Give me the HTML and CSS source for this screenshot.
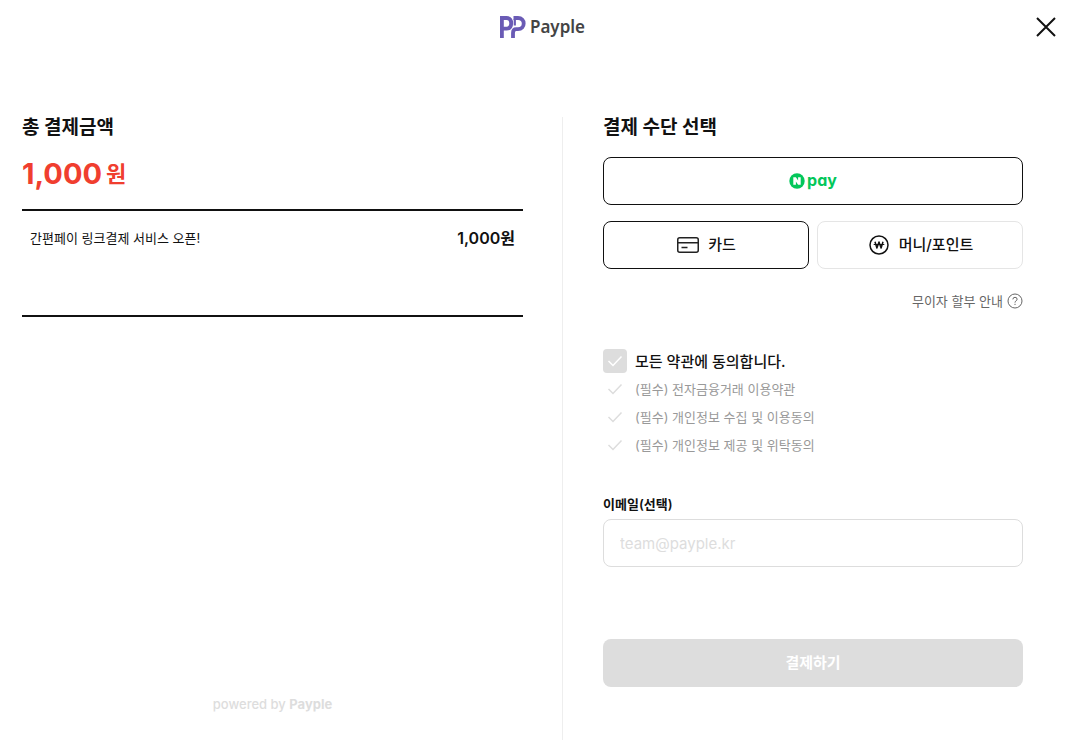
FILE: index.html
```html
<!DOCTYPE html>
<html lang="ko">
<head>
  <meta charset="UTF-8">
  <meta name="viewport" content="width=device-width, initial-scale=1.0">
  <title>Payple 결제</title>
  <link rel="stylesheet" href="styles.css">
</head>
<body>
  <header class="header">
    <a href="#" class="logo">
      <svg width="26" height="24" viewBox="0 0 26 24" fill="none" stroke="#6a5bb5" stroke-width="3.800">
        <path d="M1.900 23V3h4.700c3.200 0 4.600 2.200 4.600 5.300s-1.400 5.300-4.600 5.300H3"/>
        <path d="M13 23v-5c0-2.700 1-3.800 3.200-3.800H18c3.700 0 5.700-2.500 5.700-5.700S21.700 3 18 3h-4.500"/>
        <path d="M14.800 4v6.500" stroke-width="2.200"/>
      </svg>
      <span class="logo-text">Payple</span>
    </a>
    <button type="button" class="close" aria-label="닫기">
      <svg width="20" height="20" viewBox="0 0 20 20" fill="none" stroke="#111" stroke-width="2">
        <path d="M1 1l18 18M19 1L1 19"/>
      </svg>
    </button>
  </header>

  <main class="content">
    <section class="order">
      <h2 class="title">총 결제금액</h2>
      <p class="total"><strong>1,000</strong><span>원</span></p>
      <div class="items">
        <div class="item">
          <span class="item-name">간편페이 링크결제 서비스 오픈!</span>
          <span class="item-price">1,000원</span>
        </div>
      </div>
      <p class="powered">powered by <b>Payple</b></p>
    </section>

    <form class="payment">
      <h2 class="title">결제 수단 선택</h2>
      <button type="button" class="method selected npay" aria-label="N pay">
        <svg width="16" height="16" viewBox="0 0 16 16">
          <circle cx="8" cy="8" r="7.700" fill="#03c75a"/>
          <path fill="#fff" d="M4.300 4.200h2.600l2.200 3.300V4.200h2.600v7.600H9.100L6.900 8.500v3.300H4.300z"/>
        </svg>
        <span>pay</span>
      </button>
      <div class="methods">
        <button type="button" class="method selected">
          <svg width="24" height="24" viewBox="0 0 24 24" fill="none" stroke="#222" stroke-width="1.500">
            <rect x="1.750" y="4.750" width="20.500" height="14.500" rx="2"/>
            <path d="M2 9.800h20M5.500 14.500h6"/>
          </svg>
          <span>카드</span>
        </button>
        <button type="button" class="method">
          <svg width="24" height="24" viewBox="0 0 24 24" fill="none" stroke="#111" stroke-width="1.500">
            <circle cx="12" cy="12" r="9"/>
            <path d="M8 8.800l1.900 6.200L12 9l2.100 6L16 8.800" stroke-linejoin="round"/>
            <path d="M6.700 11.500h10.600" stroke-width="1"/>
          </svg>
          <span>머니/포인트</span>
        </button>
      </div>
      <a href="#" class="guide">
        무이자 할부 안내
        <svg width="16" height="16" viewBox="0 0 16 16" fill="none" stroke="#666">
          <circle cx="8" cy="8" r="7"/>
          <path d="M5.900 6.400q0-2.100 2.100-2.100t2.100 1.900q0 1-1.100 1.700T8 9.600M8 10.800v1.200"/>
        </svg>
      </a>

      <div class="terms">
        <label class="term all"><input type="checkbox"><span>모든 약관에 동의합니다.</span></label>
        <label class="term"><input type="checkbox"><span>(필수) 전자금융거래 이용약관</span></label>
        <label class="term"><input type="checkbox"><span>(필수) 개인정보 수집 및 이용동의</span></label>
        <label class="term"><input type="checkbox"><span>(필수) 개인정보 제공 및 위탁동의</span></label>
      </div>

      <label class="email-label" for="email">이메일(선택)</label>
      <input type="email" id="email" class="email" placeholder="team@payple.kr">
      <button type="submit" class="submit" disabled>결제하기</button>
    </form>
  </main>
</body>
</html>
```
FILE: styles.css
```css
* {
  box-sizing: border-box;
}
body {
  margin: 0;
  font-family: Inter, "Noto Sans CJK KR", sans-serif;
  color: #111;
  background: #fff;
}
h2, p {
  margin: 0;
}
button, input {
  font-family: inherit;
}
svg {
  flex: none;
}

/* header */
.header {
  display: grid;
  grid-template-columns: 1fr auto 1fr;
  align-items: center;
  height: 54px;
  padding: 0 20px 0 24px;
}
.logo {
  grid-column: 2;
  display: flex;
  align-items: center;
  gap: 4px;
  text-decoration: none;
}
.logo-text {
  font: 600 17px/24px "Noto Sans", sans-serif;
  color: #444;
}
.close {
  display: flex;
  justify-self: end;
  padding: 5px;
  border: 0;
  background: none;
  cursor: pointer;
}

/* layout */
.content {
  display: grid;
  grid-template-columns: 1fr 461px;
  min-height: calc(100vh - 132px);
  margin: 63px 58px 0 22px;
}
.order {
  display: flex;
  flex-direction: column;
  padding-right: 39px;
}
.payment {
  display: flex;
  flex-direction: column;
  padding-left: 40px;
  border-left: 1px solid #eee;
}
.title {
  font-size: 19px;
  line-height: 22px;
  font-weight: 700;
}

/* order */
.total {
  display: flex;
  align-items: center;
  gap: 4px;
  height: 48px;
  margin: 11px 0;
  line-height: 48px;
  color: #f03e2f;
}
.total strong {
  font-size: 29px;
  font-weight: 700;
}
.total span {
  font-size: 22px;
  font-weight: 600;
}
.items {
  min-height: 108px;
  padding: 15px 8px;
  border-top: 2px solid #111;
  border-bottom: 2px solid #111;
}
.item {
  display: flex;
  align-items: center;
  justify-content: space-between;
  line-height: 24px;
}
.item-name {
  font-size: 13px;
}
.item-price {
  font-size: 16px;
  font-weight: 600;
}
.powered {
  margin-top: auto;
  padding-bottom: 24px;
  font-size: 13px;
  line-height: 24px;
  font-weight: 500;
  text-align: center;
  color: #ddd;
}

/* payment */
.method {
  display: flex;
  align-items: center;
  justify-content: center;
  gap: 8px;
  flex: 1;
  height: 48px;
  padding: 0;
  border: 1px solid #e5e5e5;
  border-radius: 8px;
  background: #fff;
  color: #111;
  font-size: 15px;
  font-weight: 500;
  cursor: pointer;
}
.method.selected {
  border-color: #111;
}
.method span {
  padding-bottom: 3px;
}
.npay {
  flex: none;
  gap: 2px;
  margin: 18px 0 16px;
  color: #03c75a;
  font-size: 16px;
  font-weight: 700;
  font-feature-settings: "cv11";
}
.methods {
  display: flex;
  gap: 8px;
}
.guide {
  display: flex;
  align-items: center;
  align-self: flex-end;
  gap: 4px;
  margin-top: 20px;
  font-size: 13px;
  line-height: 24px;
  color: #666;
  text-decoration: none;
}
.terms {
  margin: 34px 0 36px;
}
.term {
  display: flex;
  align-items: center;
  gap: 8px;
  height: 28px;
  font-size: 13px;
  color: #999;
}
.term span {
  padding-bottom: 2px;
}
.term input {
  appearance: none;
  width: 24px;
  height: 24px;
  margin: 0;
  border-radius: 4px;
  background: url("data:image/svg+xml,%3Csvg xmlns='http://www.w3.org/2000/svg' viewBox='0 0 24 24' fill='none' stroke='%23ddd' stroke-width='1.500'%3E%3Cpath d='M5.500 12l4.500 4.500 8.500-9'/%3E%3C/svg%3E");
}
.all {
  font-size: 15px;
  font-weight: 500;
  color: #111;
}
.all input {
  background: #ddd url("data:image/svg+xml,%3Csvg xmlns='http://www.w3.org/2000/svg' viewBox='0 0 24 24' fill='none' stroke='%23fff' stroke-width='1.500'%3E%3Cpath d='M5.500 12l4.500 4.500 8.500-9'/%3E%3C/svg%3E");
}
.email-label {
  font-size: 13px;
  line-height: 18px;
  font-weight: 600;
}
.email {
  width: 100%;
  height: 48px;
  margin: 6px 0 72px;
  padding: 0 16px;
  border: 1px solid #ddd;
  border-radius: 8px;
  font-size: 15px;
  color: #111;
}
.email::placeholder {
  color: #ddd;
}
.submit {
  height: 48px;
  padding: 0 0 4px;
  border: 0;
  border-radius: 8px;
  background: #ddd;
  color: #fff;
  font-size: 15px;
  font-weight: 700;
}
```
